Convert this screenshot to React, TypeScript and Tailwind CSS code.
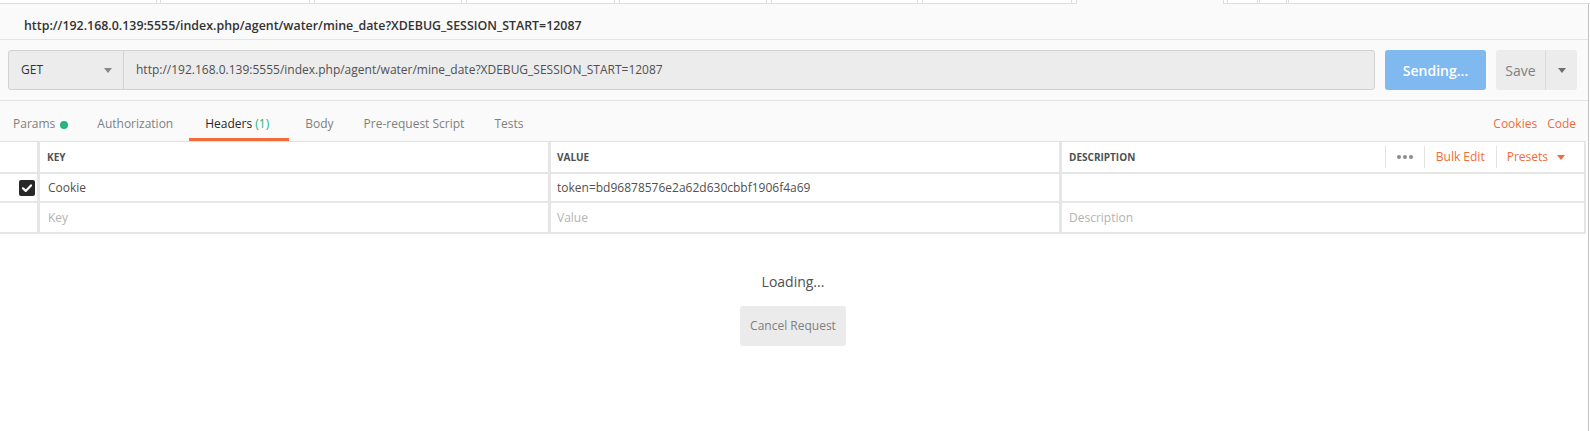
const ORANGE = "text-[#f26b3a]";

const Caret = ({ className }: { className: string }) => (
  <svg width="8" height="5" viewBox="0 0 8 5" className={className}>
    <path d="M0 0h8L4 5z" fill="currentColor" />
  </svg>
);

const TabStrip = () => (
  <div className="flex h-[4px] bg-white">
    <div className="w-[157px] border-r border-b border-[#dedede]" />
    <div className="w-[3px] border-b border-[#dedede]" />
    <div className="w-[150px] border-x border-b border-[#dedede]" />
    <div className="w-[4px] border-b border-[#dedede]" />
    <div className="w-[148px] border-x border-b border-[#dedede]" />
    <div className="w-[4px] border-b border-[#dedede]" />
    <div className="w-[149px] border-x border-b border-[#dedede]" />
    <div className="w-[4px] border-b border-[#dedede]" />
    <div className="w-[148px] border-x border-b border-[#dedede]" />
    <div className="w-[4px] border-b border-[#dedede]" />
    <div className="w-[147px] border-x border-b border-[#dedede]" />
    <div className="w-[4px] border-b border-[#dedede]" />
    <div className="w-[150px] border-x border-b border-[#dedede]" />
    <div className="w-[4px] border-b border-[#dedede]" />
    {/* active tab */}
    <div className="w-[148px] border-x border-[#dedede] bg-[#fafafa]" />
    <div className="w-[3px] border-b border-[#dedede]" />
    <div className="w-[31px] border-x border-b border-[#dedede]" />
    <div className="w-[1px] border-b border-[#dedede]" />
    <div className="w-[28px] border-x border-b border-[#dedede]" />
    <div className="w-[1px] border-b border-[#dedede]" />
    <div className="flex-1 border-l border-b border-[#dedede]" />
  </div>
);

const Checkbox = () => (
  <svg width="16" height="16" viewBox="0 0 16 16">
    <rect width="16" height="16" rx="2" fill="#282828" />
    <path
      d="M4 8.3l2.7 2.6L12 5.4"
      fill="none"
      stroke="#fff"
      strokeWidth="2.2"
      strokeLinecap="round"
      strokeLinejoin="round"
    />
  </svg>
);

const HeaderActions = () => (
  <div className="flex items-center h-full pr-[19px] font-normal">
    <div className="w-px h-[22px] bg-[#e3e3e3]" />
    <div className="flex items-center gap-[2px] px-[11px]">
      <span className="w-[4px] h-[4px] rounded-full bg-[#8c8c8c]" />
      <span className="w-[4px] h-[4px] rounded-full bg-[#8c8c8c]" />
      <span className="w-[4px] h-[4px] rounded-full bg-[#8c8c8c]" />
    </div>
    <div className="w-px h-[22px] bg-[#e3e3e3]" />
    <span className={`px-[11px] text-[12px] ${ORANGE}`}>Bulk Edit</span>
    <div className="w-px h-[22px] bg-[#e3e3e3]" />
    <span className={`pl-[10px] text-[12px] ${ORANGE}`}>Presets</span>
    <Caret className={`ml-[9px] ${ORANGE}`} />
  </div>
);

export default function App() {
  const url =
    "http://192.168.0.139:5555/index.php/agent/water/mine_date?XDEBUG_SESSION_START=12087";

  return (
    <div className="w-[1590px] h-[431px] overflow-hidden bg-white flex flex-col font-['Open_Sans',sans-serif]">
      <TabStrip />
      <div className="flex flex-1">
        <div className="w-[1588px] flex flex-col">
          {/* request name */}
          <div className="h-[36px] bg-[#fafafa] border-b border-[#e3e3e3] pt-[8px] pl-[24px]">
            <span className="text-[12.4px] leading-[20px] font-semibold text-[#333]">
              {url}
            </span>
          </div>

          {/* url bar */}
          <div className="h-[61px] bg-[#fafafa] border-b border-[#e3e3e3] flex gap-[10px] py-[10px] pl-[8px] pr-[11px]">
            <div className="flex-1 flex border border-[#d2d2d2] rounded-[3px] bg-[#ececec]">
              <div className="w-[115px] flex items-center justify-between pl-[12px] pr-[11px] border-r border-[#d2d2d2]">
                <span className="text-[12px] text-[#333]">GET</span>
                <Caret className="text-[#888]" />
              </div>
              <div className="flex items-center pl-[12px] text-[12px] text-[#505050]">
                {url}
              </div>
            </div>
            <div className="w-[101px] rounded-[3px] bg-[#80b8f0] flex items-center justify-center text-[14px] font-semibold text-white">
              Sending...
            </div>
            <div className="w-[81px] rounded-[3px] bg-[#ececec] flex">
              <div className="w-[49px] flex items-center justify-center text-[14px] text-[#808080]">
                Save
              </div>
              <div className="w-px bg-[#dadada]" />
              <div className="flex-1 flex items-center justify-center">
                <Caret className="text-[#707070]" />
              </div>
            </div>
          </div>

          {/* request tabs */}
          <div className="h-[40px] bg-[#fafafa] flex justify-between text-[12px] leading-[18px]">
            <div className="flex">
              <div className="flex items-start pt-[14px] pl-[13px] pr-[13px] text-[#808080]">
                Params
                <span className="ml-[5px] mt-[6px] w-[8px] h-[8px] rounded-full bg-[#26b47f]" />
              </div>
              <div className="pt-[14px] px-[16px] text-[#808080]">Authorization</div>
              <div className="pt-[14px] pl-[16px] pr-[20px] text-[#282828] border-b-[3px] border-[#f26b3a]">
                Headers <span className="text-[#26b47f]">(1)</span>
              </div>
              <div className="pt-[14px] px-[16px] text-[#808080]">Body</div>
              <div className="pt-[14px] px-[14px] text-[#808080]">Pre-request Script</div>
              <div className="pt-[14px] px-[16px] text-[#808080]">Tests</div>
            </div>
            <div className={`flex gap-[10px] pt-[14px] pr-[12px] ${ORANGE}`}>
              <span>Cookies</span>
              <span>Code</span>
            </div>
          </div>

          {/* headers table */}
          <div className="mr-[2px] grid grid-cols-[37px_508px_508px_1fr] gap-x-[3px] gap-y-[2px] bg-[#e6e6e6] border-t border-t-[#e0e0e0] border-r-2 border-r-[#e6e6e6] border-b-2 border-b-[#e6e6e6]">
            <div className="h-[30px] bg-white" />
            <div className="h-[30px] bg-white flex items-center pl-[7px] text-[10px] font-bold text-[#505050]">
              KEY
            </div>
            <div className="h-[30px] bg-white flex items-center pl-[6px] text-[10px] font-bold text-[#505050]">
              VALUE
            </div>
            <div className="h-[30px] bg-white flex items-center justify-between pl-[7px]">
              <span className="text-[10px] font-bold text-[#505050]">DESCRIPTION</span>
              <HeaderActions />
            </div>

            <div className="h-[27px] bg-white flex items-center justify-end pr-[2px]">
              <Checkbox />
            </div>
            <div className="h-[27px] bg-white flex items-center pl-[8px] text-[12px] text-[#505050]">
              Cookie
            </div>
            <div className="h-[27px] bg-white flex items-center pl-[6px] text-[12px] text-[#505050]">
              token=bd96878576e2a62d630cbbf1906f4a69
            </div>
            <div className="h-[27px] bg-white" />

            <div className="h-[29px] bg-white" />
            <div className="h-[29px] bg-white flex items-center pl-[8px] text-[12px] text-[#b3b3b3]">
              Key
            </div>
            <div className="h-[29px] bg-white flex items-center pl-[6px] text-[12px] text-[#b3b3b3]">
              Value
            </div>
            <div className="h-[29px] bg-white flex items-center pl-[7px] text-[12px] text-[#b3b3b3]">
              Description
            </div>
          </div>

          {/* response loading */}
          <div className="mr-[2px] flex flex-col items-center pt-[38px]">
            <div className="text-[14px] leading-[20px] text-[#505050]">Loading...</div>
            <button className="mt-[14px] h-[40px] w-[106px] rounded-[3px] bg-[#ebebeb] text-[12px] text-[#808080]">
              Cancel Request
            </button>
          </div>
        </div>
        <div className="w-px bg-[#c2c2c2]" />
        <div className="w-px bg-white" />
      </div>
    </div>
  );
}
